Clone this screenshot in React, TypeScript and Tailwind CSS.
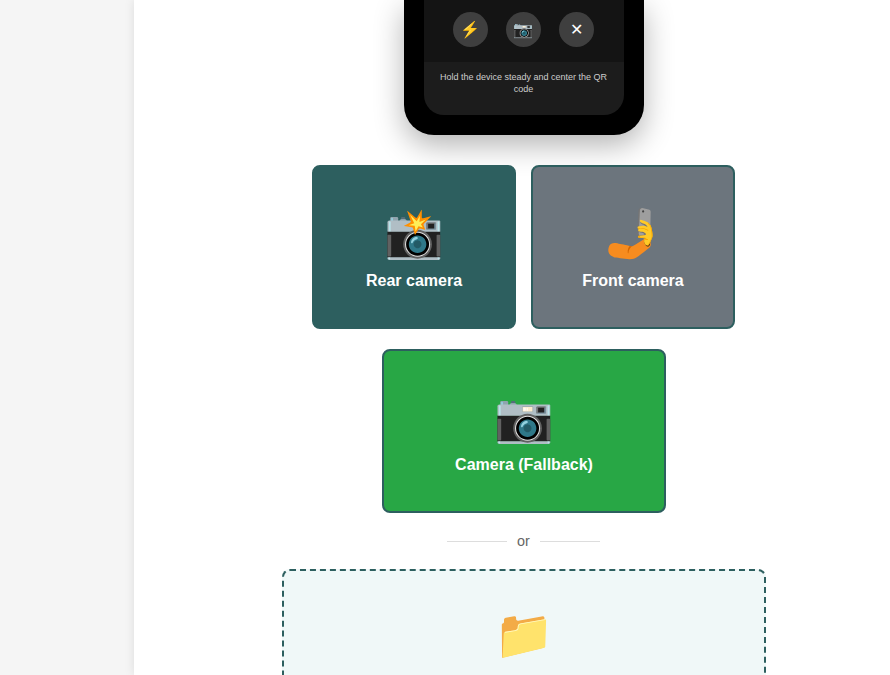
function CamButton({ icon, label, cls }: { icon: string; label: string; cls: string }) {
  return (
    <button className={`flex h-[164px] flex-col items-center justify-center rounded-lg border-2 border-[#2d5f5f] pt-[2px] text-white ${cls}`}>
      <span className="mb-[10px] text-[48px] leading-[56px]">{icon}</span>
      <span className="text-base font-bold leading-[18px]">{label}</span>
    </button>
  );
}

function RoundButton({ icon, cls }: { icon: string; cls?: string }) {
  return (
    <div className={`flex h-[35px] w-[35px] items-center justify-center rounded-full bg-[#3f3f3f] text-[16px] text-white ${cls ?? ""}`}>
      {icon}
    </div>
  );
}

export default function App() {
  return (
    <div className="flex h-[675px] w-[890px] overflow-hidden bg-[#f5f5f5] font-['Liberation_Sans',_'Noto_Color_Emoji',sans-serif]">
      <div className="w-[134px] shrink-0" />
      <main className="flex w-[780px] shrink-0 flex-col items-center bg-white shadow-[0_0_10px_rgba(0,0,0,0.1)]">
        {/* phone mock, top is scrolled out of view */}
        <div className="h-[135px] w-[240px] shrink-0 rounded-b-[30px] bg-black px-5 pb-5 shadow-[0_10px_30px_rgba(0,0,0,0.3)]">
          <div className="flex h-[115px] flex-col overflow-hidden rounded-b-[20px] bg-[#1c1c1c]">
            <div className="flex h-[62px] items-start gap-[18px] bg-[#141414] pl-[29px] pt-3">
              <RoundButton icon="⚡" />
              <RoundButton icon="📷" />
              <RoundButton icon="✕" />
            </div>
            <p className="pl-[14px] pr-[15px] pt-[9px] text-center text-[9px] leading-3 text-[#cccccc]">
              Hold the device steady and center the QR code
            </p>
          </div>
        </div>

        <div className="mt-[30px] flex w-[424px] gap-[15px]">
          <CamButton icon="📸" label="Rear camera" cls="w-[204px] bg-[#2d5f5f]" />
          <CamButton icon="🤳" label="Front camera" cls="w-[204px] bg-[#6c757d]" />
        </div>

        <div className="mt-5">
          <CamButton icon="📷" label="Camera (Fallback)" cls="w-[284px] bg-[#28a745]" />
        </div>

        <div className="mt-[18px] flex items-center gap-[10px] pr-px text-[14.4px] leading-[20px] text-[#666666]">
          <span className="h-px w-[60px] bg-[#dddddd]" />
          <span>or</span>
          <span className="h-px w-[60px] bg-[#dddddd]" />
        </div>

        <div className="mt-[18px] flex h-[200px] w-[484px] shrink-0 justify-center rounded-lg border-2 border-dashed border-[#2d5f5f] bg-[#f0f8f8] pt-[36px]">
          <span className="text-[48px] leading-[56px]">📁</span>
        </div>
      </main>
    </div>
  );
}
